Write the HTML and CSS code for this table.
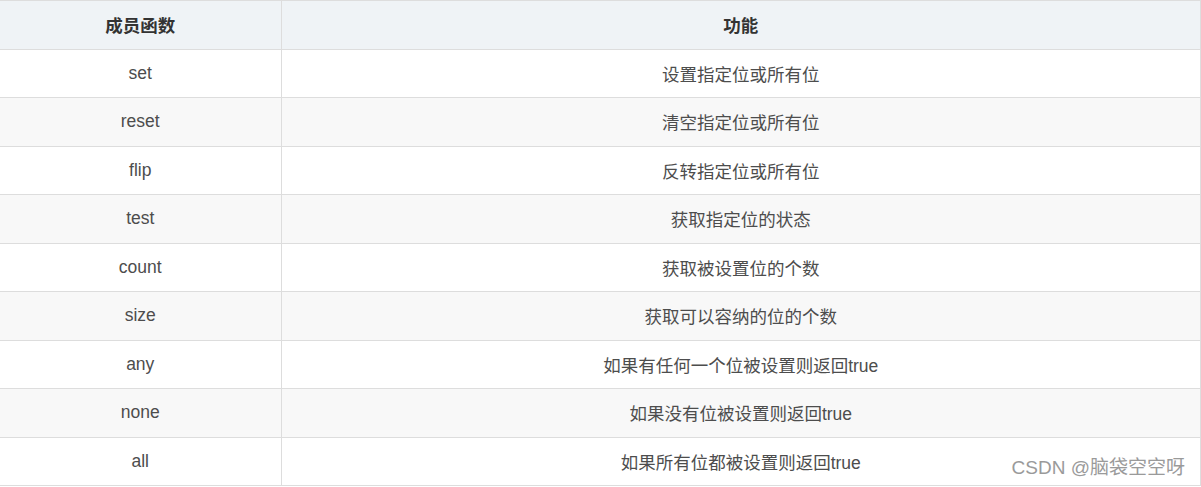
FILE: index.html
```html
<!DOCTYPE html>
<html lang="zh">
<head>
<meta charset="utf-8">
<link rel="stylesheet" href="styles.css">
</head>
<body>
<div class="wrap">
<table class="tbl">
<colgroup><col class="c1"><col class="c2"></colgroup>
<thead>
<tr><th>成员函数</th><th>功能</th></tr>
</thead>
<tbody>
<tr><td>set</td><td>设置指定位或所有位</td></tr>
<tr><td>reset</td><td>清空指定位或所有位</td></tr>
<tr><td>flip</td><td>反转指定位或所有位</td></tr>
<tr><td>test</td><td>获取指定位的状态</td></tr>
<tr><td>count</td><td>获取被设置位的个数</td></tr>
<tr><td>size</td><td>获取可以容纳的位的个数</td></tr>
<tr><td>any</td><td>如果有任何一个位被设置则返回true</td></tr>
<tr><td>none</td><td>如果没有位被设置则返回true</td></tr>
<tr><td>all</td><td>如果所有位都被设置则返回true</td></tr>
</tbody>
</table>
<div class="wm">CSDN @脑袋空空呀</div>
</div>
</body>
</html>
```

FILE: styles.css
```css
html, body { margin: 0; padding: 0; background: #fff; }
.wrap { position: relative; width: 1201px; height: 487px; overflow: hidden; }
.tbl {
  width: 1201px;
  border-collapse: collapse;
  table-layout: fixed;
  font-family: "Liberation Sans", "Noto Sans CJK SC", sans-serif;
  font-size: 17.5px;
  color: #4d4d4d;
}
.c1 { width: 281px; }
.tbl th, .tbl td {
  border: 1px solid #dddddd;
  text-align: center;
  padding: 0;
  height: 47.5px;
}
.tbl tr > :first-child { border-left: none; }
.tbl th { background: #eff3f6; font-weight: bold; color: #333; }
.tbl tbody tr:nth-child(even) td { background: #f8f8f8; }
.wm {
  position: absolute;
  right: 16px;
  bottom: 8px;
  font-family: "Liberation Sans", "Noto Sans CJK SC", sans-serif;
  font-size: 19px;
  color: #9a9a9a;
}
```
